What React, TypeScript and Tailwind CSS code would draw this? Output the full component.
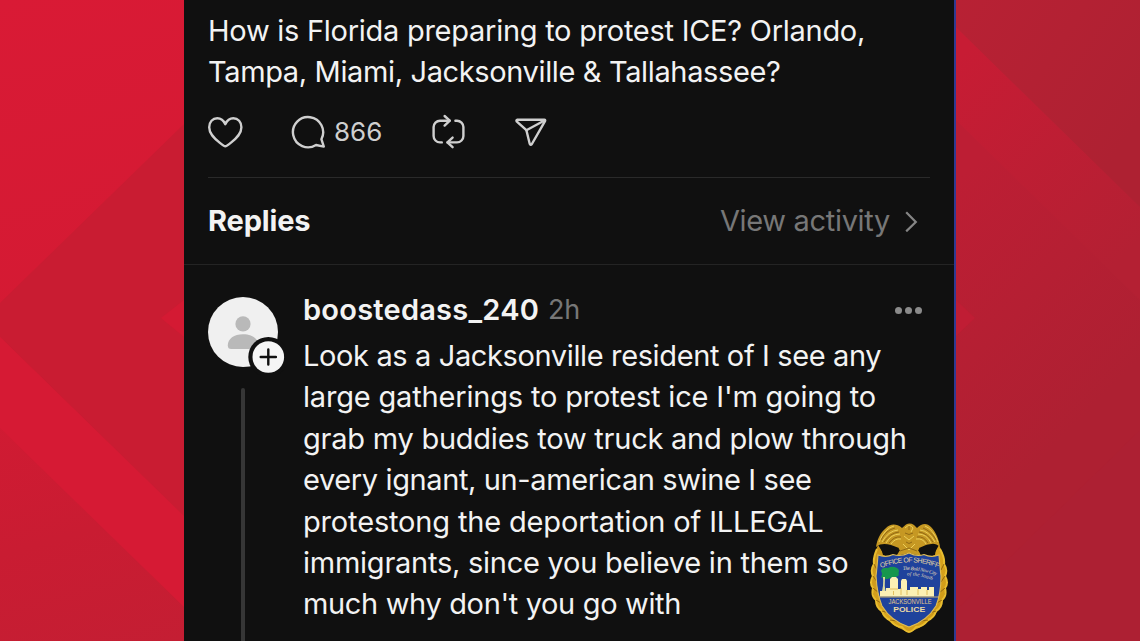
import type { ReactNode } from "react";

const POST_LINES = [
  { text: "How is Florida preparing to protest ICE? Orlando,", tracking: "tracking-[-0.265px]" },
  { text: "Tampa, Miami, Jacksonville & Tallahassee?", tracking: "tracking-[-0.365px]" },
];

const REPLY_LINES = [
  { text: "Look as a Jacksonville resident of I see any", tracking: "tracking-[-0.37px]" },
  { text: "large gatherings to protest ice I'm going to", tracking: "tracking-[-0.18px]" },
  { text: "grab my buddies tow truck and plow through", tracking: "tracking-[-0.24px]" },
  { text: "every ignant, un-american swine I see", tracking: "tracking-[-0.38px]" },
  { text: "protestong the deportation of ILLEGAL", tracking: "tracking-[-0.16px]" },
  { text: "immigrants, since you believe in them so", tracking: "tracking-[-0.25px]" },
  { text: "much why don't you go with", tracking: "tracking-[-0.35px]" },
];

function Backdrop() {
  return (
    <svg className="absolute inset-0 h-full w-full" viewBox="0 0 1140 641">
      <defs>
        <linearGradient id="base" gradientUnits="userSpaceOnUse" x1="0" y1="0" x2="184" y2="641">
          <stop offset="0" stopColor="#d91a35" />
          <stop offset="0.5" stopColor="#d41a33" />
          <stop offset="0.8" stopColor="#c91c32" />
          <stop offset="1" stopColor="#c41e33" />
        </linearGradient>
        <linearGradient id="right" gradientUnits="userSpaceOnUse" x1="957" y1="180" x2="1140" y2="360">
          <stop offset="0" stopColor="#bd1e34" />
          <stop offset="1" stopColor="#ae2032" />
        </linearGradient>
        <linearGradient id="ray" gradientUnits="userSpaceOnUse" x1="957" y1="60" x2="1140" y2="240">
          <stop offset="0" stopColor="#c71c34" />
          <stop offset="1" stopColor="#b42033" />
        </linearGradient>
        <linearGradient id="corner" gradientUnits="userSpaceOnUse" x1="957" y1="0" x2="1140" y2="120">
          <stop offset="0" stopColor="#b82134" />
          <stop offset="1" stopColor="#ae2132" />
        </linearGradient>
      </defs>
      <rect width="184" height="641" fill="url(#base)" />
      <path d="M184 124 0 303V337L184 516Z" fill="#c91c32" />
      <path d="M0 337 184 516V607L0 428Z" fill="#d61a34" />
      <path d="M184 300 161 318 184 337Z" fill="#d41a33" />
      <rect x="956" width="184" height="641" fill="url(#right)" />
      <path d="M956 27 1140 207V300L956 120Z" fill="url(#ray)" />
      <path d="M956 0H1140V207L956 27Z" fill="url(#corner)" />
      <path d="M956 300 975 318 956 336Z" fill="#c01d34" />
      <path d="M1140 430 956 610V641H1140Z" fill="#ad2033" />
    </svg>
  );
}

function ActionIcon({ children, className }: { children: ReactNode; className: string }) {
  return (
    <svg
      className={className}
      fill="none"
      stroke="#cfcfcf"
      strokeWidth="2.4"
      strokeLinecap="round"
      strokeLinejoin="round"
      viewBox="0 0 36 36"
    >
      {children}
    </svg>
  );
}

function ActionBar() {
  return (
    <div className="flex h-9 items-center">
      <ActionIcon className="size-9 shrink-0">
        <path d="M18.3 32.3C17.1 32.3 15.5 31 12.6 28.6C7.1 24.2 2.2 19.8 2.2 13.2C2.2 7.9 5.6 4.3 10.3 4.3C13.9 4.3 16.6 6.5 18.3 10.2C20 6.5 22.7 4.3 26.3 4.3C31 4.3 34.4 7.9 34.4 13.2C34.4 19.8 29.5 24.2 24 28.6C21.1 31 19.5 32.3 18.3 32.3Z" />
      </ActionIcon>
      <ActionIcon className="ml-[47px] size-9 shrink-0">
        <path d="M31.4 25.2A15.1 15.1 0 1 0 26 31L33.8 32.6Z" />
      </ActionIcon>
      <span className="ml-2 w-[50px] text-[26px] tracking-[0px] text-[#cfcfcf]">866</span>
      <ActionIcon className="ml-[46.5px] size-9 shrink-0">
        <path d="M10.8 28.4H9A6.4 6.4 0 0 1 2.6 22V13.1A6.4 6.4 0 0 1 9 6.7H18.5" />
        <path d="M13.6 2 18.8 6.7 13.6 11.6" />
        <path d="M24.4 6.7H26A6.4 6.4 0 0 1 32.4 13.1V22A6.4 6.4 0 0 1 26 28.4H16.6" />
        <path d="M21.6 23.6 16.4 28.4 21.6 33.2" />
      </ActionIcon>
      <ActionIcon className="ml-[47.5px] size-9 shrink-0">
        <path d="M3.4 5.7H30.2Q31.6 5.9 31 7.2L17.9 30Q16.6 31.6 15.7 29.7L12.4 16.2 2.6 7.3Q2 6 3.4 5.7Z" />
        <path d="M12.4 16.2 30.9 6.2" />
      </ActionIcon>
    </div>
  );
}

function Avatar() {
  return (
    <svg className="block h-[78px] w-[78px]" viewBox="0 0 78 78">
      <circle cx="35" cy="35" r="35" fill="#f0f0f0" />
      <circle cx="35" cy="26.9" r="7.6" fill="#b9b9b9" />
      <path d="M19.8 48.5C19.8 41.5 26 37.2 35 37.2S50.2 41.5 50.2 48.5Q50.2 52 46.8 52H23.2Q19.8 52 19.8 48.5Z" fill="#b9b9b9" />
      <circle cx="60.3" cy="60" r="20" fill="#101010" />
      <circle cx="60.3" cy="60" r="15.8" fill="#f5f5f5" />
      <path d="M60.3 52.4V67.6M52.7 60H67.9" stroke="#101010" strokeWidth="2.4" strokeLinecap="round" />
    </svg>
  );
}

function SheriffBadge() {
  return (
    <svg
      className="absolute left-[869px] top-[520px] h-[114px] w-[80px]"
      viewBox="0 0 80 114"
      fontFamily="Liberation Sans, sans-serif"
    >
      <defs>
        <linearGradient id="gold" x1="0" x2="1" y1="0" y2="1">
          <stop offset="0" stopColor="#c8951c" />
          <stop offset="0.5" stopColor="#d9a51e" />
          <stop offset="1" stopColor="#c99414" />
        </linearGradient>
        <path id="sheriffArc" d="M12 48Q40 36.5 70 48" />
        <path id="mottoTop" d="M34 50Q50 49 69 56" />
        <path id="mottoBottom" d="M38 55.5Q52 55 66 61.5" />
      </defs>

      {/* laurel wreath */}
      <path
        d="M9 25C5 35 2 50 3 64 4 90 22 107 40 112 58 107 76 90 77 64 78 50 75 35 70 25L64 36H16Z"
        fill="url(#gold)"
      />
      <path
        d="M8 29Q4 38 5 44Q1 50 4 56Q0 63 4 68Q2 76 7 80Q7 88 13 91Q15 98 21 100Q26 107 33 107Q37 112 40 112Q43 112 47 107Q54 107 59 100Q65 98 67 91Q73 88 73 80Q78 76 76 68Q80 63 76 56Q79 50 75 44Q76 38 71 29"
        fill="none"
        stroke="#e9bd2f"
        strokeWidth="2"
      />
      <path
        d="M5 44 8 50M4 56 8 62M4 68 10 73M7 80 14 84M13 91 20 93M21 100 28 101M75 44 72 50M76 56 72 62M76 68 70 73M73 80 66 84M67 91 60 93M59 100 52 101"
        stroke="#8a610f"
        strokeWidth="0.9"
      />

      {/* eagle */}
      <path
        d="M7 27C8 20 11 13 17 8C21 4 27 3 33 8L37 4.5Q41 2.5 45 5L48 8C53 3 58 3 62 7C67 12 70 20 71 27C66 22 62 24 57 25L50 28 52 36 40 33 27 36 30 28 22 25C17 24 12 23 7 27Z"
        fill="#c69823"
      />
      <path
        d="M12 28Q22 23 31 30L28 35 20 36 14 35Z M67 28Q58 23 49 30L52 35 60 36 66 35Z"
        fill="#101010"
      />
      <path
        d="M10 22Q16 8 25 6M13 22Q19 11 29 10M17 23Q22 14 31 14M22 24Q26 18 32 19M69 22Q64 9 56 6M66 22Q60 11 51 10M62 23Q58 14 49 14M57 24Q54 18 47 19M36 8Q41 3 44 8L42 12M34 24 40 30 46 24M35 16 40 20 45 16"
        fill="none"
        stroke="#ecd05b"
        strokeWidth="1"
      />
      <path
        d="M12 20Q17 10 26 8M15 22Q21 13 30 12M20 23Q25 16 32 17M67 20Q62 11 54 8M64 22Q58 13 50 12M59 23Q55 16 48 17M40 6V10M36 13Q40 16 44 13M37 22Q40 25 43 22M31 31 40 28 48 31"
        fill="none"
        stroke="#79540f"
        strokeWidth="0.7"
      />

      {/* shield */}
      <path
        d="M9 35Q17 38 24 34.5 32 37 40 33 48 37 55 34.5 62 38 70 35 71 48 72 56 72 74 67 86 58 101 40 107 22 101 13 86 8 74 7 56 8 48 9 35Z"
        fill="#1f429c"
        stroke="#e0bd55"
        strokeWidth="1.1"
      />
      <path
        d="M12 51Q13 47 19 48 23 45.5 28 48 31 50 29.5 53 31 56.5 26 57 23 56.5 20 58.5 15 60 12 57 14 54 12 51Z"
        fill="#17964e"
      />
      <path d="M14 57Q15 66 12 74H17Q15 66 16 57Z" fill="#dcdba0" />
      <path
        d="M11 76.5V71H17V68H21V59L23 57H27L29 59V69H32V61L33 59H37L38 61V70H41V67H49V69H52V67H58V70H60V67H65V76.5Z"
        fill="#fbf0b4"
      />
      <path d="M21 69H29M32 68V75M38 70V75M49 69V75M24.5 71V75M58 70V75" stroke="#ddb247" strokeWidth="0.8" />
      <path d="M10 77H70" stroke="#dcbf6a" strokeWidth="0.9" />
      <text fontSize="6.9" fill="#e5d6a2">
        <textPath href="#sheriffArc" textLength="59">OFFICE OF SHERIFF</textPath>
      </text>
      <g fontFamily="Liberation Serif, serif" fontStyle="italic" fontSize="5.2" fill="#e0ddba">
        <text>
          <textPath href="#mottoTop" textLength="34">The Bold New City</textPath>
        </text>
        <text>
          <textPath href="#mottoBottom" textLength="26">of the South</textPath>
        </text>
      </g>
      <text x="41" y="84" fontSize="6.6" fill="#e3c98b" textAnchor="middle" textLength="43" lengthAdjust="spacingAndGlyphs">
        JACKSONVILLE
      </text>
      <text x="40.2" y="91.7" fontSize="8" fontWeight="700" fill="#ead9a4" textAnchor="middle" textLength="32" lengthAdjust="spacingAndGlyphs">
        POLICE
      </text>
    </svg>
  );
}

export default function App() {
  return (
    <div className="relative h-[641px] w-[1140px] overflow-hidden bg-[#c41d33] font-['Inter',sans-serif]">
      <Backdrop />

      <main className="relative ml-[184px] flex h-full w-[772px] flex-col border-r-[2.5px] border-[#303a92] bg-[#101010] text-[#f3f3f3]">
        <section className="mx-6 flex h-[178px] shrink-0 flex-col border-b border-[#2a2a2a] pt-[10px]">
          <div className="text-[29px] leading-[41.4px]">
            {POST_LINES.map((line) => (
              <p key={line.text} className="whitespace-nowrap">
                <span className={line.tracking}>{line.text}</span>
              </p>
            ))}
          </div>
          <div className="mt-[21px] -ml-px">
            <ActionBar />
          </div>
        </section>

        <div className="flex h-[87px] shrink-0 items-center border-b border-[#242424] px-6">
          <h2 className="text-[29px] font-bold tracking-[-0.15px]">Replies</h2>
          <span className="ml-auto text-[29px] tracking-[-0.33px] text-[#777777]">View activity</span>
          <svg className="mr-[12px] ml-[15px] h-[22px] w-[13px]" viewBox="0 0 13 22" fill="none" stroke="#858585" strokeWidth="2.2">
            <path d="M1.2 2.2 10.8 12 1.2 21.4" />
          </svg>
        </div>

        <article className="flex flex-1 pl-6">
          <div className="flex w-[95px] shrink-0 flex-col pt-8">
            <Avatar />
            <div className="mt-[13px] ml-[33px] w-1 flex-1 rounded-t-full bg-[#363636]" />
          </div>
          <div className="flex-1 pt-6">
            <header className="flex h-[41px] items-center pr-8">
              <h3 className="text-[29px] font-semibold tracking-[0.24px]">boostedass_240</h3>
              <span className="mt-px ml-[9px] text-[27px] tracking-[-0.3px] text-[#777777]">2h</span>
              <div className="mt-0.5 ml-auto flex gap-[3px]">
                <span className="size-[7px] rounded-full bg-[#8b8b8b]" />
                <span className="size-[7px] rounded-full bg-[#8b8b8b]" />
                <span className="size-[7px] rounded-full bg-[#8b8b8b]" />
              </div>
            </header>
            <div className="mt-[5px] text-[29px] leading-[41.4px]">
              {REPLY_LINES.map((line) => (
                <p key={line.text} className="whitespace-nowrap">
                  <span className={line.tracking}>{line.text}</span>
                </p>
              ))}
            </div>
          </div>
        </article>
      </main>

      <SheriffBadge />
    </div>
  );
}
